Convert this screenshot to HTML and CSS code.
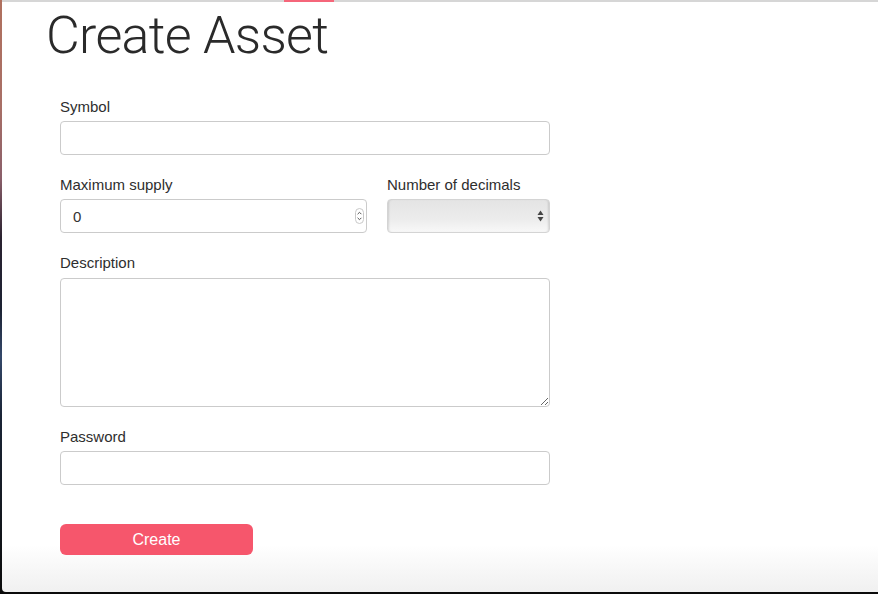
FILE: index.html
```html
<!DOCTYPE html>
<html>
<head>
<meta charset="utf-8">
<link rel="stylesheet" href="styles.css">
</head>
<body>
<div class="window">
  <div class="tab-indicator"></div>
  <main class="content">
    <h1 class="title">Create Asset</h1>
    <form class="form">
      <div class="group">
        <label class="label">Symbol</label>
        <input class="field field-wide" type="text">
      </div>
      <div class="row">
        <div class="group group-supply">
          <label class="label">Maximum supply</label>
          <div class="number-wrap">
            <input class="field field-supply" type="text" value="0">
            <span class="spinner">
              <svg width="9" height="16" viewBox="0 0 9 16">
                <rect x="0.5" y="0.5" width="8" height="15" rx="4" fill="#fff" stroke="#c8c8c8"/>
                <path d="M2.6 6.2 L4.5 4.3 L6.4 6.2" fill="none" stroke="#555" stroke-width="1"/>
                <path d="M2.6 9.8 L4.5 11.7 L6.4 9.8" fill="none" stroke="#555" stroke-width="1"/>
              </svg>
            </span>
          </div>
        </div>
        <div class="group group-decimals">
          <label class="label">Number of decimals</label>
          <div class="select-wrap">
            <select class="select"><option></option></select>
            <span class="select-arrows">
              <svg width="7" height="12" viewBox="0 0 7 12">
                <path d="M3.5 0.5 L6.5 5 L0.5 5 Z" fill="#444"/>
                <path d="M3.5 11.5 L6.5 7 L0.5 7 Z" fill="#444"/>
              </svg>
            </span>
          </div>
        </div>
      </div>
      <div class="group">
        <label class="label label-desc">Description</label>
        <textarea class="field field-wide textarea"></textarea>
      </div>
      <div class="group">
        <label class="label">Password</label>
        <input class="field field-wide" type="password">
      </div>
      <button class="button" type="button">Create</button>
    </form>
  </main>
</div>
</body>
</html>
```

FILE: styles.css
```css
* { box-sizing: border-box; }
html, body {
  margin: 0;
  padding: 0;
  height: 594px;
  overflow: hidden;
}
body {
  background: linear-gradient(to bottom, #b0705e 0%, #a86f66 18%, #8a5f6a 30%, #2a2230 40%, #1c2233 52%, #34486a 60%, #1a2436 70%, #151a22 85%, #0a0a0a 100%);
  font-family: "Liberation Sans", Arial, sans-serif;
  color: #333;
}
.window {
  position: relative;
  margin-left: 2px;
  height: 592px;
  background: linear-gradient(to bottom, #ffffff 0%, #ffffff 92%, #f0f0f0 100%);
  border-top: 2px solid #d6d6d6;
  border-bottom-left-radius: 4px;
}
.tab-indicator {
  position: absolute;
  top: -2px;
  left: 282px;
  width: 50px;
  height: 2px;
  background: #f5667a;
}
.content {
  padding-left: 44px;
}
.title {
  margin: 0;
  padding-top: 4px;
  font-family: Roboto, "Liberation Sans", sans-serif;
  font-weight: 300;
  font-size: 52px;
  line-height: 60px;
  color: #2a2a2a;
  letter-spacing: -0.7px;
}
.form {
  padding-left: 14px;
  padding-top: 31px;
  width: 505px;
}
.group {
  display: flex;
  flex-direction: column;
  margin-bottom: 20px;
}
.label {
  font-size: 15px;
  line-height: 20px;
  margin-bottom: 4px;
  color: #2e2e2e;
}
.label-desc { margin-bottom: 5px; }
.field {
  height: 34px;
  border: 1px solid #cbcbcb;
  border-radius: 4px;
  background: #fff;
  font-family: "Liberation Sans", Arial, sans-serif;
  font-size: 15px;
  color: #333;
  padding: 0 12px;
  outline: none;
}
.field-wide { width: 490px; }
.row {
  display: flex;
  gap: 20px;
}
.group-supply { width: 307px; }
.group-decimals { width: 163px; }
.number-wrap, .select-wrap {
  position: relative;
}
.field-supply { width: 307px; }
.spinner {
  position: absolute;
  right: 3px;
  top: 9px;
  display: flex;
}
.select {
  appearance: none;
  -webkit-appearance: none;
  width: 163px;
  height: 34px;
  border: 1px solid #d4d4d4;
  border-radius: 4px;
  background: linear-gradient(to bottom, #e4e4e4 0%, #ececec 60%, #f8f8f8 100%);
  box-shadow: inset 2px 0 2px -1px rgba(0,0,0,0.12), inset -2px 0 2px -1px rgba(0,0,0,0.12);
  outline: none;
}
.select-arrows {
  position: absolute;
  right: 6px;
  top: 11px;
  display: flex;
}
.textarea {
  height: 129px;
  resize: vertical;
  padding: 8px 12px;
}
.button {
  margin-top: 19px;
  width: 193px;
  height: 31px;
  border: none;
  border-radius: 6px;
  background: #f6566c;
  color: #fff;
  font-family: "Liberation Sans", Arial, sans-serif;
  font-size: 16px;
  cursor: pointer;
}
```
